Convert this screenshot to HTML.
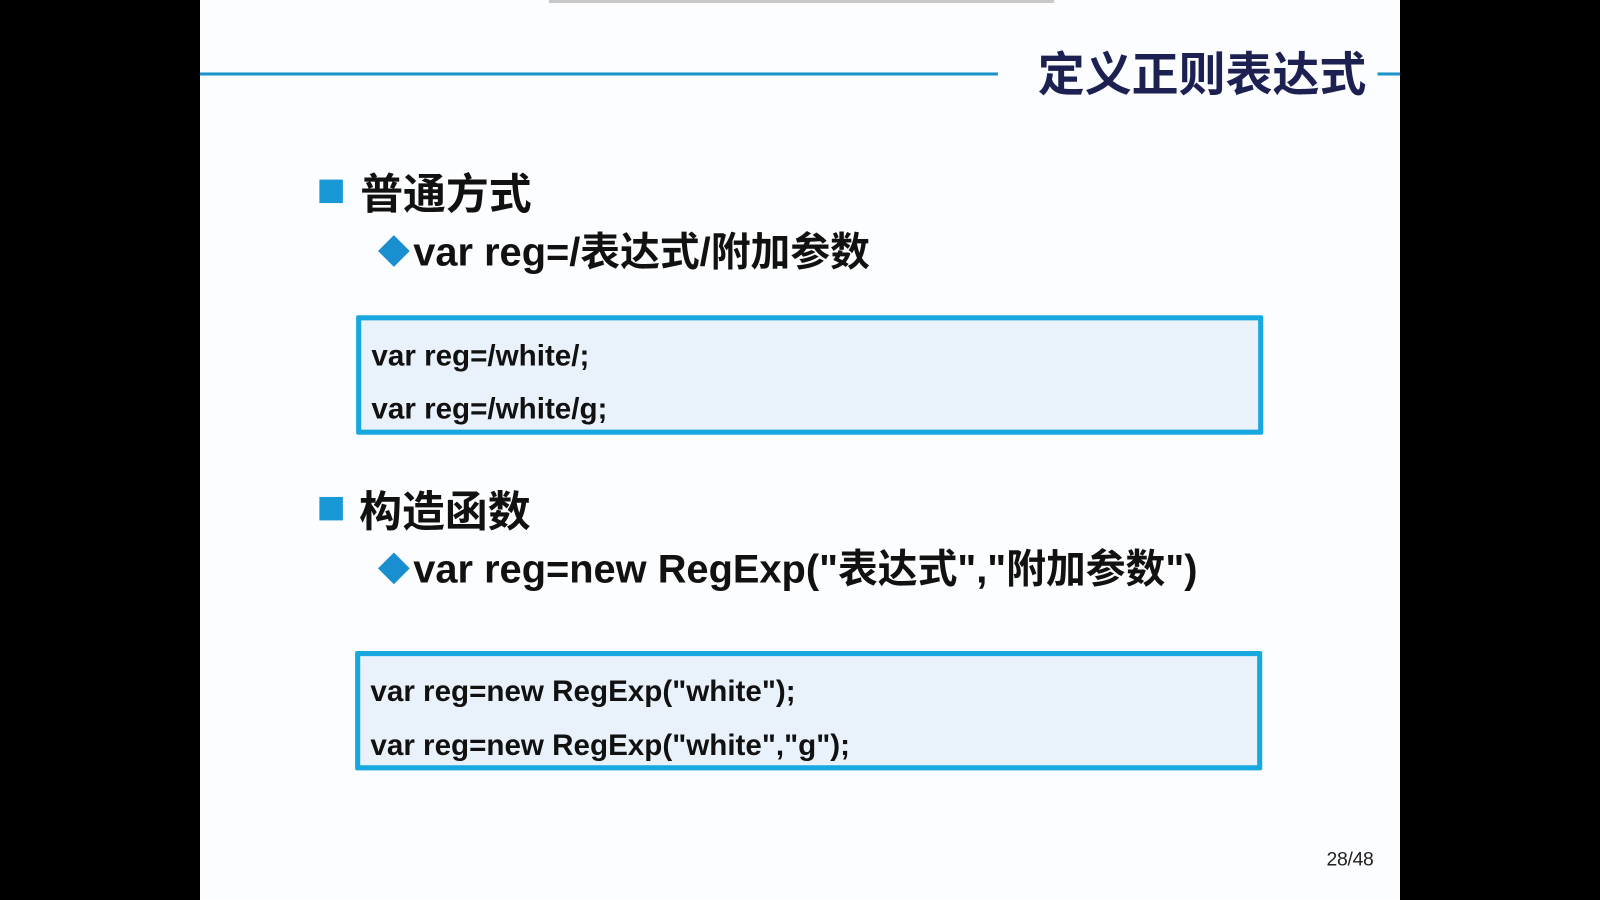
<!DOCTYPE html>
<html><head><meta charset="utf-8"><style>
html,body{margin:0;padding:0;background:#000;overflow:hidden;width:1600px;height:900px}
#w{position:absolute;left:0;top:0;width:1568px;height:882px;transform:scale(1.020408);transform-origin:0 0;background:#000}
.s{position:absolute;left:196px;top:0;width:1176px;height:882px;background:#fcfdfe}
.a{position:absolute;font-family:"Liberation Sans","Noto Sans CJK SC",sans-serif;font-weight:bold;white-space:nowrap;color:#111}
.sq{position:absolute;width:23px;height:23px;background:#1898d4}
.dm{position:absolute;width:22px;height:22px;background:#1a8fd0;transform:rotate(45deg)}
.box{position:absolute;border:5px solid #18a8e0;background:#e9f2fa;box-sizing:border-box;border-radius:2px}
.c{font-size:29px}
</style></head><body><div id="w">
<div class="s"></div>
<div style="position:absolute;left:538px;top:0;width:495px;height:3px;background:#c8c8c8"></div>
<div style="position:absolute;left:196px;top:71px;width:782px;height:3px;background:#1b95c9"></div>
<div style="position:absolute;left:1350px;top:71px;width:22px;height:3px;background:#1b95c9"></div>
<div class="a" style="left:1017px;top:37px;font-size:46px;color:#1d2152">定义正则表达式</div>

<div class="sq" style="left:313px;top:176px"></div>
<div class="a" style="left:353px;top:157px;font-size:42px">普通方式</div>
<div class="dm" style="left:375px;top:235px"></div>
<div class="a" style="left:405px;top:216px;font-size:39px">var reg=/表达式/附加参数</div>
<div class="box" style="left:349px;top:309px;width:889px;height:117px"></div>
<div class="a c" style="left:364px;top:333px">var reg=/white/;</div>
<div class="a c" style="left:364px;top:385px">var reg=/white/g;</div>

<div class="sq" style="left:313px;top:487px"></div>
<div class="a" style="left:352px;top:468px;font-size:42px">构造函数</div>
<div class="dm" style="left:375px;top:546px"></div>
<div class="a" style="left:405px;top:527px;font-size:39px">var reg=new RegExp("表达式","附加参数")</div>
<div class="box" style="left:348px;top:638px;width:889px;height:117px"></div>
<div class="a c" style="left:363px;top:662px">var reg=new RegExp("white");</div>
<div class="a c" style="left:363px;top:715px">var reg=new RegExp("white","g");</div>

<div class="a" style="left:1300px;top:832px;font-size:19px;font-weight:normal;color:#222;letter-spacing:-0.3px">28/48</div>
</div></body></html>
